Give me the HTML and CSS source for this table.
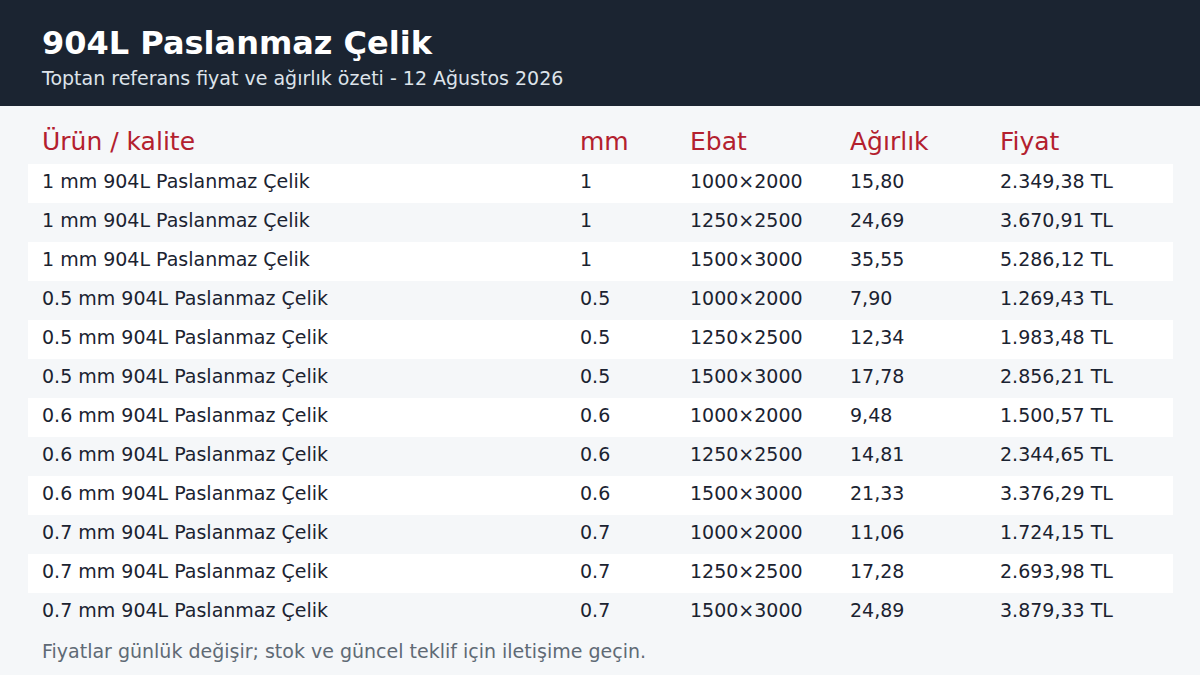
FILE: index.html
```html
<!DOCTYPE html>
<html lang="tr">
<head>
<meta charset="utf-8">
<link rel="stylesheet" href="styles.css">
</head>
<body>
<header class="top">
  <h1 class="title">904L Paslanmaz Çelik</h1>
  <p class="subtitle">Toptan referans fiyat ve ağırlık özeti - 12 Ağustos 2026</p>
</header>
<main class="content">
  <table class="prices">
    <thead>
      <tr><th class="c1">Ürün / kalite</th><th class="c2">mm</th><th class="c3">Ebat</th><th class="c4">Ağırlık</th><th class="c5">Fiyat</th></tr>
    </thead>
    <tbody>
      <tr><td>1 mm 904L Paslanmaz Çelik</td><td>1</td><td>1000×2000</td><td>15,80</td><td>2.349,38 TL</td></tr>
      <tr><td>1 mm 904L Paslanmaz Çelik</td><td>1</td><td>1250×2500</td><td>24,69</td><td>3.670,91 TL</td></tr>
      <tr><td>1 mm 904L Paslanmaz Çelik</td><td>1</td><td>1500×3000</td><td>35,55</td><td>5.286,12 TL</td></tr>
      <tr><td>0.5 mm 904L Paslanmaz Çelik</td><td>0.5</td><td>1000×2000</td><td>7,90</td><td>1.269,43 TL</td></tr>
      <tr><td>0.5 mm 904L Paslanmaz Çelik</td><td>0.5</td><td>1250×2500</td><td>12,34</td><td>1.983,48 TL</td></tr>
      <tr><td>0.5 mm 904L Paslanmaz Çelik</td><td>0.5</td><td>1500×3000</td><td>17,78</td><td>2.856,21 TL</td></tr>
      <tr><td>0.6 mm 904L Paslanmaz Çelik</td><td>0.6</td><td>1000×2000</td><td>9,48</td><td>1.500,57 TL</td></tr>
      <tr><td>0.6 mm 904L Paslanmaz Çelik</td><td>0.6</td><td>1250×2500</td><td>14,81</td><td>2.344,65 TL</td></tr>
      <tr><td>0.6 mm 904L Paslanmaz Çelik</td><td>0.6</td><td>1500×3000</td><td>21,33</td><td>3.376,29 TL</td></tr>
      <tr><td>0.7 mm 904L Paslanmaz Çelik</td><td>0.7</td><td>1000×2000</td><td>11,06</td><td>1.724,15 TL</td></tr>
      <tr><td>0.7 mm 904L Paslanmaz Çelik</td><td>0.7</td><td>1250×2500</td><td>17,28</td><td>2.693,98 TL</td></tr>
      <tr><td>0.7 mm 904L Paslanmaz Çelik</td><td>0.7</td><td>1500×3000</td><td>24,89</td><td>3.879,33 TL</td></tr>
    </tbody>
  </table>
  <p class="note">Fiyatlar günlük değişir; stok ve güncel teklif için iletişime geçin.</p>
</main>
</body>
</html>
```

FILE: styles.css
```css
* { box-sizing: border-box; }
html, body { margin: 0; padding: 0; }
body {
  width: 1200px;
  height: 675px;
  overflow: hidden;
  background: #f5f7f9;
  font-family: "DejaVu Sans", "Liberation Sans", sans-serif;
  color: #1b2331;
}
.top {
  height: 106px;
  background: #1b2431;
  padding: 22px 42px 0;
}
.title {
  margin: 0;
  font-size: 32px;
  line-height: 42px;
  font-weight: bold;
  color: #ffffff;
}
.subtitle {
  margin: 0;
  font-size: 19px;
  line-height: 28px;
  color: #dde3ea;
}
.content {
  padding: 14px 27px 0 28px;
}
.prices {
  width: 1145px;
  border-collapse: collapse;
  table-layout: fixed;
}
.prices th {
  text-align: left;
  font-weight: normal;
  font-size: 25px;
  color: #b3202e;
  height: 44px;
  padding: 0 0 2px 14px;
  vertical-align: middle;
}
.prices .c1 { width: 538px; }
.prices .c2 { width: 110px; }
.prices .c3 { width: 160px; }
.prices .c4 { width: 150px; }
.prices .c5 { width: 187px; }
.prices td {
  height: 39px;
  padding: 0 0 6px 14px;
  font-size: 19px;
  line-height: 22px;
  color: #1b2331;
  vertical-align: middle;
  white-space: nowrap;
}
.prices tbody tr:nth-child(odd) { background: #ffffff; }
.prices tbody tr:nth-child(even) { background: #f5f7f9; }
.note {
  margin: 6px 0 0 14px;
  font-size: 19px;
  line-height: 26px;
  color: #5f6a75;
}
```
